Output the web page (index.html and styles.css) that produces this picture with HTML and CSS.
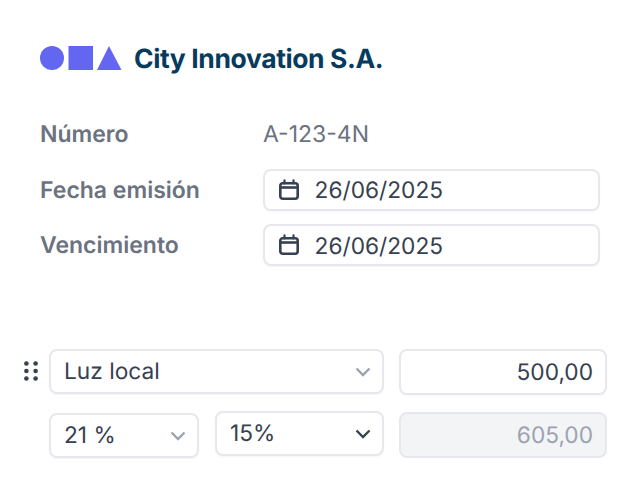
FILE: index.html
```html
<!DOCTYPE html>
<html>
<head>
    <title>Factura</title>
    <link rel="stylesheet" href="styles.css">
</head>
<body>
    <div class="head">
        <div class="brand">
            <svg class="logo" width="82" height="24" viewBox="0 0 82 24">
                <circle cx="12" cy="12" r="12" fill="#6366f1"/>
                <rect x="28.5" y="0" width="24.5" height="24" fill="#6366f1"/>
                <path d="M69 0L81.5 24H57Z" fill="#6366f1"/>
            </svg>
            <span class="company">City Innovation S.A.</span>
        </div>

        <div class="meta">
            <div class="meta-row">
                <span class="label">Número</span>
                <span class="number">A-123-4N</span>
            </div>
            <div class="meta-row">
                <span class="label">Fecha emisión</span>
                <div class="box date">
                    <svg class="cal" width="22" height="22" viewBox="0 0 22 22" fill="none" stroke="#374151" stroke-width="2.6">
                        <rect x="2.3" y="4.3" width="17.4" height="15.4" rx="2.4"/>
                        <path d="M2.5 8.5H19.5" stroke-width="2.6"/>
                        <path d="M6.5 1.3V4.5M15.5 1.3V4.5" stroke-linecap="round" stroke-width="2.2"/>
                    </svg>
                    <span class="date-text">26/06/2025</span>
                </div>
            </div>
            <div class="meta-row">
                <span class="label">Vencimiento</span>
                <div class="box date">
                    <svg class="cal" width="22" height="22" viewBox="0 0 22 22" fill="none" stroke="#374151" stroke-width="2.6">
                        <rect x="2.3" y="4.3" width="17.4" height="15.4" rx="2.4"/>
                        <path d="M2.5 8.5H19.5" stroke-width="2.6"/>
                        <path d="M6.5 1.3V4.5M15.5 1.3V4.5" stroke-linecap="round" stroke-width="2.2"/>
                    </svg>
                    <span class="date-text">26/06/2025</span>
                </div>
            </div>
        </div>
    </div>

    <div class="line">
        <div class="line-row">
            <svg class="grip" width="14" height="20" viewBox="0 0 14 20" fill="#374151">
                <circle cx="2.4" cy="2.5" r="2.3"/><circle cx="11.6" cy="2.5" r="2.3"/>
                <circle cx="2.4" cy="10" r="2.3"/><circle cx="11.6" cy="10" r="2.3"/>
                <circle cx="2.4" cy="17.5" r="2.3"/><circle cx="11.6" cy="17.5" r="2.3"/>
            </svg>
            <div class="box select concept">
                <span>Luz local</span>
                <svg width="16" height="10" viewBox="0 0 16 10" fill="none" stroke="#9ca3af" stroke-width="2.4"><path d="M1.5 1.5L8 8L14.5 1.5"/></svg>
            </div>
            <div class="box amount">500,00</div>
        </div>
        <div class="line-row second">
            <div class="box select iva">
                <span>21 %</span>
                <svg width="16" height="10" viewBox="0 0 16 10" fill="none" stroke="#9ca3af" stroke-width="2.4"><path d="M1.5 1.5L8 8L14.5 1.5"/></svg>
            </div>
            <div class="box select irpf">
                <span>15%</span>
                <svg width="16" height="10" viewBox="0 0 16 10" fill="none" stroke="#374151" stroke-width="2.4"><path d="M1.5 1.5L8 8L14.5 1.5"/></svg>
            </div>
            <div class="box amount total">605,00</div>
        </div>
    </div>
</body>
</html>
```

FILE: styles.css
```css
body {
    margin: 0;
    height: 480px;
    overflow: hidden;
    background: #fff;
    font-family: Inter, sans-serif;
    color: #374151;
    text-rendering: geometricPrecision;
}

.head {
    padding: 46px 40px 0;
}

.brand {
    display: flex;
    align-items: center;
    height: 24px;
}

.logo {
    display: block;
    margin-right: 12px;
}

.company {
    padding-top: 2px;
    font-size: 26.5px;
    font-weight: 700;
    color: #073b5e;
    letter-spacing: -0.4px;
}

.meta {
    margin-top: 43px;
}

.meta-row {
    display: flex;
    align-items: center;
    height: 42px;
    margin-bottom: 13.5px;
}

.label {
    width: 223px;
    font-size: 23px;
    font-weight: 600;
    color: #6b7280;
}

.number {
    font-size: 23px;
    color: #6b7280;
}

.box {
    box-sizing: border-box;
    display: flex;
    align-items: center;
    background: #fff;
    border: 2px solid #e7e8ee;
    border-radius: 8px;
    font-size: 22.7px;
    box-shadow: 0 1px 2px rgba(0, 0, 0, 0.04);
}

.date {
    width: 338px;
    height: 42px;
    padding-left: 13px;
}

.date-text {
    padding-top: 2px;
}

.cal {
    margin-right: 15px;
}

.line {
    margin-top: 83px;
    padding-left: 24px;
}

.line-row {
    display: flex;
    align-items: flex-start;
}

.line-row.second {
    margin-top: 16px;
    padding-left: 25px;
}

.grip {
    margin: 12px 11px 0 0;
}

.select {
    justify-content: space-between;
    padding: 0 11px 0 13px;
}

.concept {
    width: 335px;
    height: 45px;
    margin-right: 15px;
}

.iva {
    width: 150px;
    height: 45px;
    margin: 2px 16px 0 0;
}

.irpf {
    width: 169px;
    height: 45px;
    margin-right: 15px;
}

.amount {
    width: 208px;
    height: 46px;
    justify-content: flex-end;
    padding-right: 12px;
}

.total {
    margin-top: 1px;
    background: #f3f4f6;
    color: #9ca3af;
    box-shadow: none;
}
```
